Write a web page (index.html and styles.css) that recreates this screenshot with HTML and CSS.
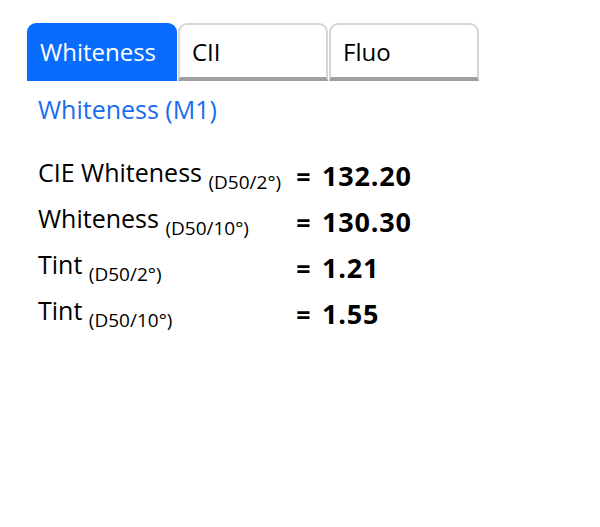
FILE: index.html
```html
<!DOCTYPE html>
<html>
<head>
<meta charset="utf-8">
<link rel="stylesheet" href="styles.css">
</head>
<body>
<div class="page">
  <div class="tabs">
    <div class="tab active">Whiteness</div>
    <div class="tab">CII</div>
    <div class="tab">Fluo</div>
  </div>
  <div class="panel">
    <h2 class="title">Whiteness (M1)</h2>
    <table class="results">
      <tr><td class="label">CIE Whiteness <sub>(D50/2°)</sub></td><td class="val">= <span class="num">132.20</span></td></tr>
      <tr><td class="label">Whiteness <sub>(D50/10°)</sub></td><td class="val">= <span class="num">130.30</span></td></tr>
      <tr><td class="label">Tint <sub>(D50/2°)</sub></td><td class="val">= <span class="num">1.21</span></td></tr>
      <tr><td class="label">Tint <sub>(D50/10°)</sub></td><td class="val">= <span class="num">1.55</span></td></tr>
    </table>
  </div>
</div>
</body>
</html>
```
FILE: styles.css
```css
html, body { margin: 0; padding: 0; background: #fff; }
body { font-family: "Open Sans", "Noto Sans", sans-serif; color: #000; }
.page { padding: 23px 0 0 27px; }
.tabs { display: flex; gap: 1px; }
.tab {
  box-sizing: border-box;
  width: 150px;
  height: 58px;
  padding: 11px 0 0 12px;
  font-size: 24px;
  line-height: 32px;
  border-radius: 9px 9px 0 0;
  background: #fff;
  border: 2px solid #d6d6d6;
  border-bottom: 4px solid #a0a0a0;
}
.tab.active {
  background: #0a6cff;
  color: #fff;
  border: none;
  padding: 13px 0 0 13px;
}
.panel { padding-left: 11px; }
.title {
  margin: 11px 0 0 0;
  font-size: 25px;
  font-weight: normal;
  line-height: 34px;
  color: #1a6cf0;
}
.results { border-collapse: collapse; margin-top: 26px; }
.results td { padding: 0; height: 46px; font-size: 25px; vertical-align: middle; white-space: nowrap; }
.results td.label { padding-right: 15px; }
.results td.val { font-weight: bold; }
.results sub { font-size: 19px; vertical-align: -7px; }
.results .num { font-size: 27px; letter-spacing: 0.8px; margin-left: 5px; }
```
